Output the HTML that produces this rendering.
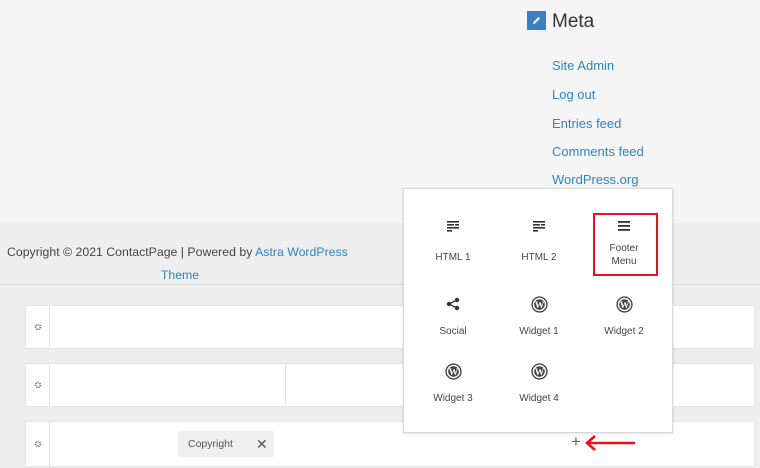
<!DOCTYPE html>
<html><head><meta charset="utf-8"><style>
*{margin:0;padding:0;box-sizing:border-box}
body{width:760px;height:468px;overflow:hidden;background:#eeeeee;font-family:"Liberation Sans",sans-serif;position:relative}
.top{position:absolute;left:0;top:0;width:760px;height:223px;background:#f5f5f5}
.ab{position:absolute}
.lnk{color:#2f83c6}
.meta-links div{position:absolute;left:552px;font-size:13px;color:#2f83c6}
.row{position:absolute;left:25px;width:730px;height:44px;background:#fff;border:1px solid #e4e4e4}
.gear{position:absolute;left:0;top:0;width:24px;height:100%;border-right:1px solid #e2e2e2;display:flex;align-items:center;justify-content:center}
.pop{position:absolute;left:403px;top:188px;width:270px;height:245px;background:#fff;border:1px solid #d8d8d8;box-shadow:0 1px 3px rgba(0,0,0,.12)}
.it{position:absolute;width:80px;text-align:center;font-size:10px;color:#444;line-height:13px}
.it svg{display:block;margin:0 auto 19px}
</style></head><body>
<div class="top"></div>
<div class="ab" style="left:527px;top:11px;width:19px;height:19px;background:#3a7fc3;display:flex;align-items:center;justify-content:center">
<svg width="11" height="11" viewBox="0 0 11 11"><path d="M2 9 L2.5 7 L7.5 2 L9 3.5 L4 8.5 Z" fill="#fff"/></svg></div>
<div class="ab" style="left:552px;top:11px;font-size:19px;color:#333">Meta</div>
<div class="meta-links">
<div style="top:58px">Site Admin</div>
<div style="top:87px">Log out</div>
<div style="top:116px">Entries feed</div>
<div style="top:144px">Comments feed</div>
<div style="top:172px">WordPress.org</div>
</div>
<div class="ab" style="left:0;top:284px;width:760px;height:1px;background:#dcdcdc"></div>
<div class="ab" style="left:7px;top:241px;font-size:12.3px;color:#444;white-space:nowrap;line-height:23px">Copyright © 2021 ContactPage | Powered by <span class="lnk">Astra WordPress</span></div>
<div class="ab lnk" style="left:0;top:264px;width:360px;text-align:center;font-size:12.3px;line-height:23px">Theme</div>

<div class="row" style="top:305px"><div class="gear"><svg width="8" height="8" viewBox="0 0 8 8"><circle cx="4" cy="4" r="2.4" fill="none" stroke="#777" stroke-width="1.8" stroke-dasharray="1.2 0.9"/></svg></div></div>
<div class="row" style="top:363px"><div class="gear"><svg width="8" height="8" viewBox="0 0 8 8"><circle cx="4" cy="4" r="2.4" fill="none" stroke="#777" stroke-width="1.8" stroke-dasharray="1.2 0.9"/></svg></div><div class="ab" style="left:259px;top:0;width:1px;height:42px;background:#e2e2e2"></div></div>
<div class="row" style="top:421px;height:46px"><div class="gear"><svg width="8" height="8" viewBox="0 0 8 8"><circle cx="4" cy="4" r="2.4" fill="none" stroke="#777" stroke-width="1.8" stroke-dasharray="1.2 0.9"/></svg></div>
<div class="ab" style="left:152px;top:9px;width:96px;height:26px;background:#efefef;border-radius:2px;font-size:10.5px;color:#555;line-height:26px;padding-left:10px">Copyright<span style="position:absolute;left:78px;top:0;font-size:14px;color:#555">✕</span></div></div>
<div class="ab" style="left:571px;top:432px;font-size:17px;color:#666">+</div>
<svg class="ab" style="left:584px;top:434px" width="54" height="18" viewBox="0 0 54 18"><path d="M51 9 H4 M11 2 L3 9 L11 16" fill="none" stroke="#e8101a" stroke-width="2.6"/></svg>

<div class="pop">
<div class="ab" style="left:189px;top:24px;width:65px;height:63px;border:2.5px solid #e4121b"></div>
<div class="it" style="left:9px;top:31px"><svg width="14" height="12" viewBox="0 0 14 12" fill="#333"><rect x="1" y="1" width="12" height="1.6"/><rect x="1" y="4" width="7" height="1.6"/><rect x="9" y="4" width="4" height="1.6"/><rect x="1" y="7" width="12" height="1.6"/><rect x="1" y="10" width="5" height="1.6"/></svg>HTML 1</div>
<div class="it" style="left:95px;top:31px"><svg width="14" height="12" viewBox="0 0 14 12" fill="#333"><rect x="1" y="1" width="12" height="1.6"/><rect x="1" y="4" width="7" height="1.6"/><rect x="9" y="4" width="4" height="1.6"/><rect x="1" y="7" width="12" height="1.6"/><rect x="1" y="10" width="5" height="1.6"/></svg>HTML 2</div>
<div class="it" style="left:180px;top:31px"><svg width="14" height="12" viewBox="0 0 14 12" fill="#333" style="margin-bottom:10px"><rect x="1" y="1" width="12" height="1.8"/><rect x="1" y="5" width="12" height="1.8"/><rect x="1" y="9" width="12" height="1.8"/></svg>Footer<br>Menu</div>
<div class="it" style="left:9px;top:108px"><svg width="14" height="14" viewBox="0 0 14 14" style="margin-bottom:14px"><circle cx="11" cy="3" r="2.2" fill="#333"/><circle cx="3" cy="7" r="2.2" fill="#333"/><circle cx="11" cy="11" r="2.2" fill="#333"/><path d="M11 3 L3 7 L11 11" stroke="#333" stroke-width="1.3" fill="none"/></svg>Social</div>
<div class="it" style="left:95px;top:107px"><svg width="17" height="17" viewBox="0 0 16 16" style="margin-bottom:12px"><circle cx="8" cy="8" r="7" fill="none" stroke="#444" stroke-width="1.3"/><circle cx="8" cy="8" r="5" fill="#444"/><text x="8" y="11.5" font-size="9" font-family="Liberation Serif" font-weight="bold" fill="#fff" text-anchor="middle">W</text></svg>Widget 1</div>
<div class="it" style="left:180px;top:107px"><svg width="17" height="17" viewBox="0 0 16 16" style="margin-bottom:12px"><circle cx="8" cy="8" r="7" fill="none" stroke="#444" stroke-width="1.3"/><circle cx="8" cy="8" r="5" fill="#444"/><text x="8" y="11.5" font-size="9" font-family="Liberation Serif" font-weight="bold" fill="#fff" text-anchor="middle">W</text></svg>Widget 2</div>
<div class="it" style="left:9px;top:174px"><svg width="17" height="17" viewBox="0 0 16 16" style="margin-bottom:12px"><circle cx="8" cy="8" r="7" fill="none" stroke="#444" stroke-width="1.3"/><circle cx="8" cy="8" r="5" fill="#444"/><text x="8" y="11.5" font-size="9" font-family="Liberation Serif" font-weight="bold" fill="#fff" text-anchor="middle">W</text></svg>Widget 3</div>
<div class="it" style="left:95px;top:174px"><svg width="17" height="17" viewBox="0 0 16 16" style="margin-bottom:12px"><circle cx="8" cy="8" r="7" fill="none" stroke="#444" stroke-width="1.3"/><circle cx="8" cy="8" r="5" fill="#444"/><text x="8" y="11.5" font-size="9" font-family="Liberation Serif" font-weight="bold" fill="#fff" text-anchor="middle">W</text></svg>Widget 4</div>
</div>
</body></html>
